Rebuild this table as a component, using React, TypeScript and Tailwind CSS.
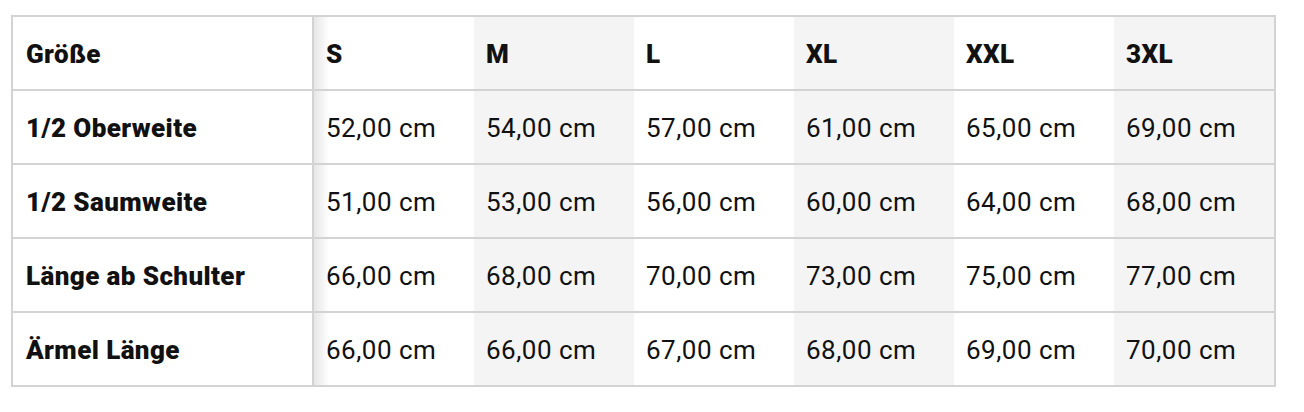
import React from 'react';

const sizes = ['S', 'M', 'L', 'XL', 'XXL', '3XL'];

const rows = [
  { label: '1/2 Oberweite', values: ['52,00', '54,00', '57,00', '61,00', '65,00', '69,00'] },
  { label: '1/2 Saumweite', values: ['51,00', '53,00', '56,00', '60,00', '64,00', '68,00'] },
  { label: 'Länge ab Schulter', values: ['66,00', '68,00', '70,00', '73,00', '75,00', '77,00'] },
  { label: 'Ärmel Länge', values: ['66,00', '66,00', '67,00', '68,00', '69,00', '70,00'] },
];

const cellBg = (i: number) => {
  if (i === 0) return 'bg-[linear-gradient(90deg,#e6e6e6,#ffffff_15px)]';
  return i % 2 === 1 ? 'bg-[#f4f4f4]' : 'bg-white';
};

const Row = ({ label, cells, bold, first }: { label: string; cells: string[]; bold?: boolean; first?: boolean }) => (
  <div
    className={`grid grid-cols-[301px_repeat(6,160px)] ${first ? 'h-[72px]' : 'h-[74px] border-t-2 border-[#d3d3d3]'}`}
  >
    <div className="flex items-center px-[13px] pt-[2px] border-r-2 border-[#d3d3d3] font-black tracking-[0.4px]">{label}</div>
    {cells.map((c, i) => (
      <div
        key={i}
        className={`flex items-center px-[12px] pt-[2px] ${cellBg(i)} ${bold ? 'font-black tracking-[0.4px]' : 'tracking-[0.5px]'}`}
      >
        {c}
      </div>
    ))}
  </div>
);

export default function App() {
  return (
    <div className="h-[412px] bg-white pl-[11px] pt-[15px] text-[26px] text-[#111] font-['Roboto',sans-serif]">
      <div className="w-[1265px] border-2 border-[#d3d3d3]">
        <Row label="Größe" cells={sizes} bold first />
        {rows.map((r) => (
          <Row key={r.label} label={r.label} cells={r.values.map((v) => `${v} cm`)} />
        ))}
      </div>
    </div>
  );
}
